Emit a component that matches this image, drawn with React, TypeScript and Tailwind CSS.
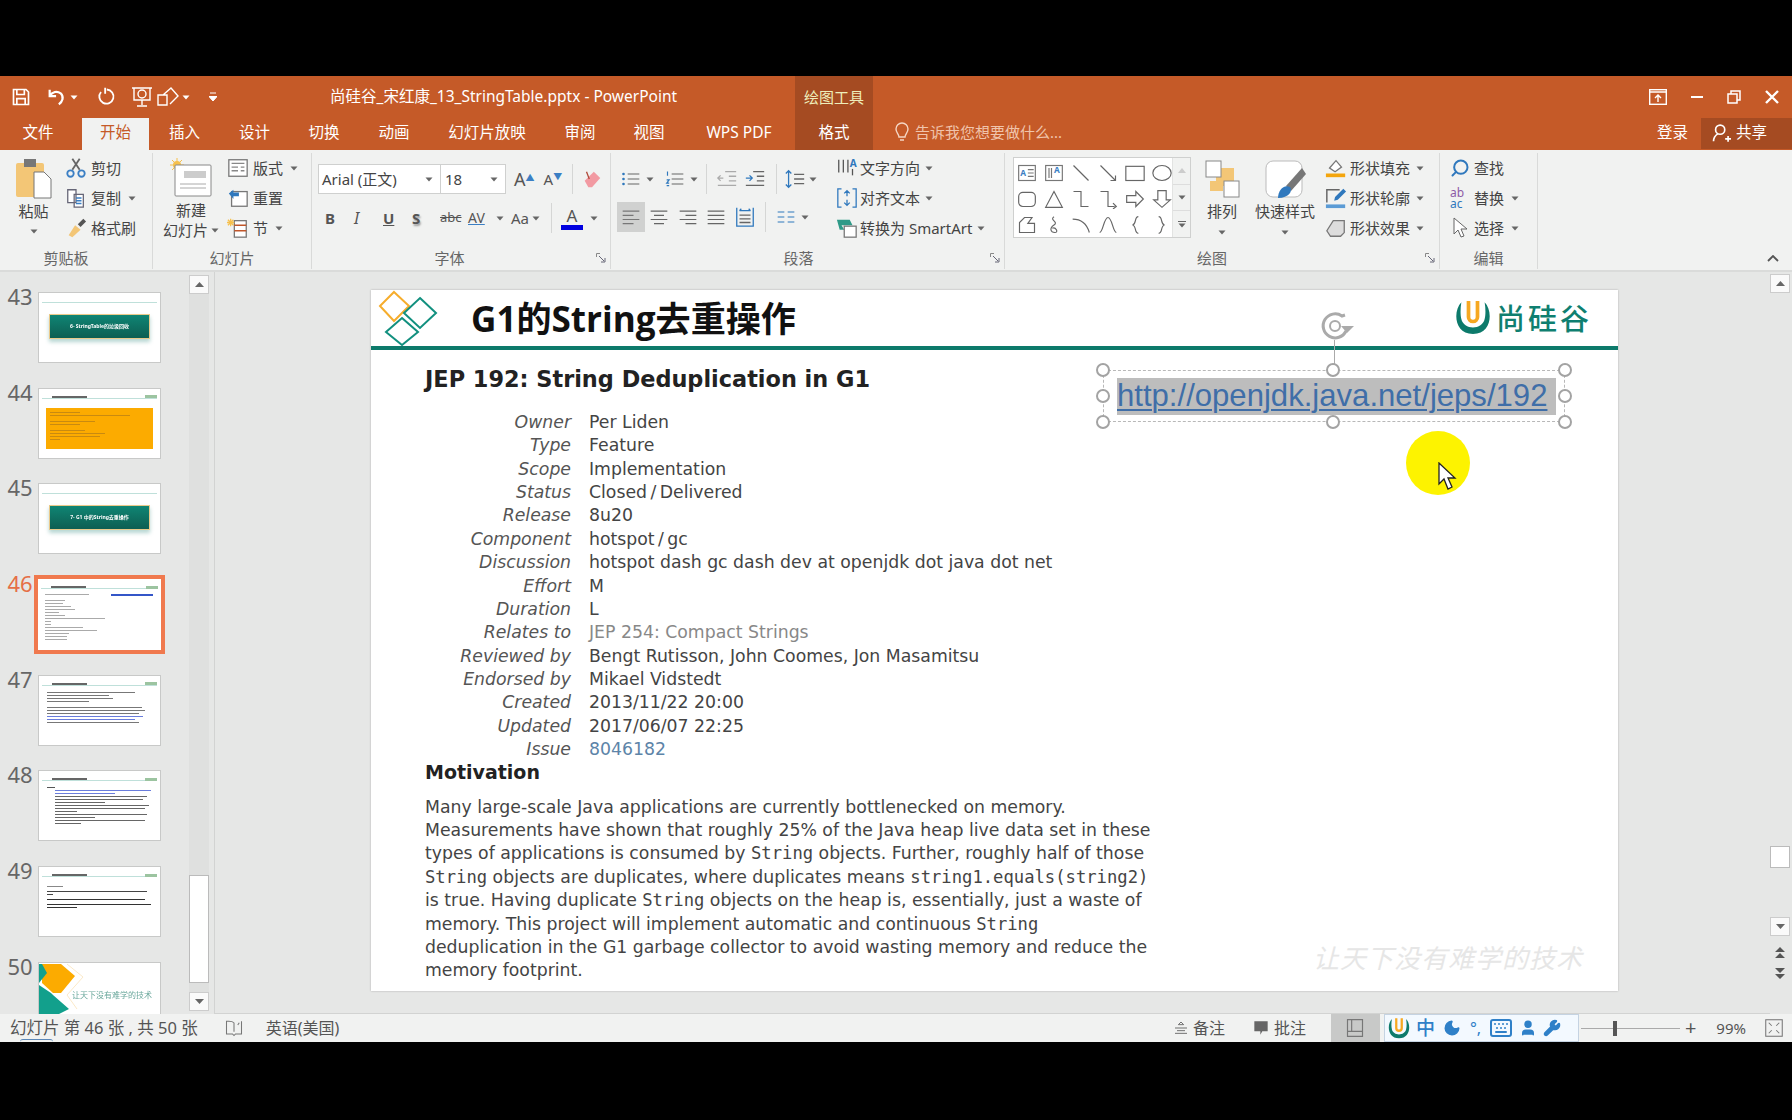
import { ReactNode } from "react";
import { Keyboard, Moon, Search, User, Wrench } from "lucide-react";

const tabs = [
  { name: "文件", cls: "w-[82px] pr-[6px] text-white" },
  { name: "开始", cls: "w-[67px] bg-[#f1f2f1] text-[#c55a28]" },
  { name: "插入", cls: "w-[71px] text-white" },
  { name: "设计", cls: "w-[69px] text-white" },
  { name: "切换", cls: "w-[70px] text-white" },
  { name: "动画", cls: "w-[70px] text-white" },
  { name: "幻灯片放映", cls: "w-[116px] text-white" },
  { name: "审阅", cls: "w-[70px] text-white" },
  { name: "视图", cls: "w-[68px] text-white" },
  { name: "WPS PDF", cls: "w-[112px] text-white" },
  { name: "格式", cls: "w-[78px] bg-[#a54b22] text-white" },
];

const jepRows = [
  ["Owner", "Per Liden"],
  ["Type", "Feature"],
  ["Scope", "Implementation"],
  ["Status", "Closed\u2009/\u2009Delivered"],
  ["Release", "8u20"],
  ["Component", "hotspot\u2009/\u2009gc"],
  ["Discussion", "hotspot dash gc dash dev at openjdk dot java dot net"],
  ["Effort", "M"],
  ["Duration", "L"],
  ["Relates to", "JEP 254: Compact Strings"],
  ["Reviewed by", "Bengt Rutisson, John Coomes, Jon Masamitsu"],
  ["Endorsed by", "Mikael Vidstedt"],
  ["Created", "2013/11/22 20:00"],
  ["Updated", "2017/06/07 22:25"],
  ["Issue", "8046182"],
];

function Caret({ className = "" }: { className?: string }) {
  return (
    <svg width="8" height="5" viewBox="0 0 8 5" className={className}>
      <path d="M0.5 0.5h7L4 4.5z" fill="#666" />
    </svg>
  );
}

function Launcher() {
  return (
    <svg width="10" height="10" viewBox="0 0 10 10" className="absolute bottom-[6px] right-[4px]">
      <path d="M0.5 4V0.5H4" stroke="#888" fill="none" />
      <path d="M3 3l5 5M9 5v4H5" stroke="#667" fill="none" />
    </svg>
  );
}

function Group({ width, label, labelCls = "", children }: { width: string; label: string; labelCls?: string; children: ReactNode }) {
  return (
    <div className={`relative h-[116px] shrink-0 border-r border-[#d9dad9] ${width}`}>
      <div className="flex h-[92px] items-start">{children}</div>
      <div className={`absolute inset-x-0 bottom-[1px] text-center text-[15px] leading-[20px] text-[#666] ${labelCls}`}>{label}</div>
    </div>
  );
}

function RowItem({ icon, text, caret, gap = "gap-[4px]" }: { icon: ReactNode; text: string; caret?: boolean; gap?: string }) {
  return (
    <div className={`flex h-[30px] items-center whitespace-nowrap text-[15px] text-[#444] ${gap}`}>
      {icon}
      <span>{text}</span>
      {caret ? <Caret className="ml-[3px]" /> : null}
    </div>
  );
}

function Ico({ children, w = 22, h = 22, vb = "0 0 24 24", className = "" }: { children: ReactNode; w?: number; h?: number; vb?: string; className?: string }) {
  return (
    <svg width={w} height={h} viewBox={vb} fill="none" strokeWidth="1.4" className={`shrink-0 ${className}`}>
      {children}
    </svg>
  );
}

function ULogo({ w, h }: { w: number; h: number }) {
  return (
    <svg width={w} height={h} viewBox="0 0 34 34" className="shrink-0">
      <path d="M6 3C-2 11-1 33 17 33S36 11 28 3c1 6 1 12 0 16-1 5-6 8-11 8s-10-3-11-8C5 15 5 9 6 3z" fill="#0d7a6b" />
      <path d="M11 2h3.500v15a2.500 2.500 0 0 0 5 0V2H23v15a6 6 0 0 1-12 0z" fill="#f6a821" />
    </svg>
  );
}

const gallery: ReactNode[] = [
  <g key="a"><rect x="2" y="3" width="20" height="18" stroke="#777" /><text x="4" y="15" fontSize="10" fontWeight="700" fill="#3b7fc4">A</text><path d="M13 8h7M13 12h7M13 16h7" stroke="#777" /></g>,
  <g key="b"><rect x="2" y="3" width="20" height="18" stroke="#777" /><text x="12" y="12" fontSize="10" fontWeight="700" fill="#3b7fc4">A</text><path d="M6 6v12M9 6v12" stroke="#777" /></g>,
  <path key="c" d="M3 3l18 18" stroke="#666" />,
  <path key="d" d="M3 3l18 18M21 15v6h-6" stroke="#666" />,
  <rect key="e" x="1" y="4" width="22" height="17" stroke="#666" />,
  <ellipse key="f" cx="12" cy="12" rx="11" ry="9" stroke="#666" />,
  <rect key="g" x="2" y="4" width="20" height="17" rx="5" stroke="#666" />,
  <path key="h" d="M12 3l10 19H2z" stroke="#666" />,
  <path key="i" d="M3 3h9v18h9" stroke="#666" />,
  <path key="j" d="M3 3h9v18h8M18 17l4 4-4 3" stroke="#666" />,
  <path key="k" d="M2 8h11V3l9 9-9 9v-5H2z" stroke="#666" />,
  <path key="l" d="M7 2h10v11h5l-10 9-10-9h5z" stroke="#666" />,
  <path key="m" d="M3 21V9l6-6h9l-5 7h8v11z" stroke="#666" />,
  <path key="n" d="M12 2c-6 4 6 6 0 10s-4 9 1 9 1-7-3-5" stroke="#666" />,
  <path key="o" d="M2 5c10 0 17 6 20 16" stroke="#666" />,
  <path key="p" d="M2 21C6 21 7 3 12 3s6 18 10 18" stroke="#666" />,
  <path key="q" d="M16 2c-5 0-2 9-7 10 5 1 2 10 7 10" stroke="#666" />,
  <path key="r" d="M8 2c5 0 2 9 7 10-5 1-2 10-7 10" stroke="#666" />,
];

function TextLines({ widths, color = "bg-[#777]", indent = 0 }: { widths: number[]; color?: string; indent?: number }) {
  return (
    <div className="flex flex-col gap-[2px]" style={{ paddingLeft: indent }}>
      {widths.map((w, i) => (
        <div key={i} className={`h-px ${color}`} style={{ width: w }} />
      ))}
    </div>
  );
}

function Thumb({ number, active, title, children }: { number: number; active?: boolean; title?: boolean; children?: ReactNode }) {
  return (
    <div className="relative mb-[24.7px] h-[71px] w-[123px] shrink-0">
      <div className={`absolute left-[-33px] top-[-14px] w-[30px] text-center text-[22px] leading-[36px] ${active ? "text-[#e56f47]" : "text-[#666]"}`}>{number}</div>
      <div className={`h-full overflow-hidden bg-white ${active ? "outline-[4px] outline-[#f0794e]" : "border border-[#c8c9c8]"}`}>
        <div className="h-full blur-[0.4px]">
          {title ? (
            <div className="mx-[3px] mt-[7px] flex h-[3px] items-center justify-between border-b border-[#bfe0da]">
              <div className="ml-[10px] h-[2px] w-[35px] bg-[#666]" />
              <div className="h-[3px] w-[12px] bg-[#9cc4a0]" />
            </div>
          ) : null}
          {children}
        </div>
      </div>
    </div>
  );
}

function TealBanner({ text }: { text: string }) {
  return (
    <div className="mx-[10px] mt-[11px] flex h-[25px] items-center justify-center border border-[#e9c98a] bg-gradient-to-b from-[#0f8574] to-[#0d5e52] text-[5px] font-bold text-white shadow-[0_3px_4px_rgba(15,120,105,0.3)]">
      {text}
    </div>
  );
}

function ThumbPanel() {
  return (
    <div className="relative flex h-full w-[215px] shrink-0 border-r border-[#d2d3d2]">
      <div className="h-full w-[189px] overflow-hidden pl-[38px] pt-[20px]">
        <Thumb number={43}>
          <div className="mx-[3px] mt-[7px] h-[3px] border-b border-[#bfe0da]" />
          <TealBanner text="6- StringTable的垃圾回收" />
        </Thumb>
        <Thumb number={44} title>
          <div className="mx-[7px] mt-[9px] h-[41px] bg-[#fcab00] p-[4px]">
            <TextLines widths={[30, 80, 0, 45, 30, 0, 35, 55, 50, 10]} color="bg-[#c98a10]" />
          </div>
        </Thumb>
        <Thumb number={45}>
          <div className="mx-[3px] mt-[7px] h-[3px] border-b border-[#bfe0da]" />
          <TealBanner text="7- G1 中的String去重操作" />
        </Thumb>
        <Thumb number={46} active title>
          <div className="relative px-[7px] pt-[5px]">
            <div className="absolute right-[8px] top-[5px] h-[2px] w-[42px] bg-[#3456c8]" />
            <TextLines widths={[44, 0, 20, 18, 26, 30, 14, 20, 60, 6, 6, 38, 52, 24, 22, 22]} color="bg-[#aaa]" />
          </div>
        </Thumb>
        <Thumb number={47} title>
          <div className="px-[8px] pt-[6px]">
            <TextLines widths={[88, 62, 66, 42, 0, 95, 98, 92]} color="bg-[#777]" />
            <div className="mt-[2px]"><TextLines widths={[96, 88]} color="bg-[#6a7ddc]" /></div>
            <div className="mt-[2px]"><TextLines widths={[92]} color="bg-[#777]" /></div>
          </div>
        </Thumb>
        <Thumb number={48} title>
          <div className="px-[8px] pt-[6px]">
            <TextLines widths={[8]} color="bg-[#555]" />
            <div className="mt-[2px]"><TextLines widths={[96, 60]} color="bg-[#6a7ddc]" indent={8} /></div>
            <div className="mt-[2px]"><TextLines widths={[92, 88, 50, 94, 90, 22, 92, 40, 90, 26]} color="bg-[#666]" indent={8} /></div>
          </div>
        </Thumb>
        <Thumb number={49} title>
          <div className="px-[8px] pt-[9px]">
            <TextLines widths={[16]} color="bg-[#888]" />
            <div className="mt-[4px]"><TextLines widths={[100, 6]} color="bg-[#444]" /></div>
            <div className="mt-[4px]"><TextLines widths={[98]} color="bg-[#333]" /></div>
            <div className="mt-[4px]"><TextLines widths={[104, 30]} color="bg-[#333]" /></div>
          </div>
        </Thumb>
        <Thumb number={50}>
          <div className="relative h-full">
            <svg width="123" height="70" viewBox="0 0 123 70" className="absolute inset-0">
              <path d="M3 1H22L36 13 22 30H14L3 20z" fill="#fcab00" />
              <path d="M0 1h3L8 10 0 20z" fill="#12a08c" />
              <path d="M0 22L12 30 14 32 30 46 18 52H0z" fill="#12a08c" />
              <path d="M28 1l16 13-16 18 10 14" stroke="#fbe9c8" fill="none" />
            </svg>
            <div className="absolute left-[33px] top-[26px] whitespace-nowrap text-[8px] text-[#6aa89c]">让天下没有难学的技术</div>
          </div>
        </Thumb>
      </div>
      <div className="relative my-[3px] w-[20px] shrink-0 bg-[#dfe0df]">
        <div className="flex h-[19px] items-center justify-center border border-[#ccc] bg-[#fafafa]">
          <svg width="9" height="5" viewBox="0 0 9 5"><path d="M4.5 0L9 5H0z" fill="#666" /></svg>
        </div>
        <div className="absolute inset-x-0 top-[600px] h-[108px] border border-[#bbb] bg-white" />
        <div className="absolute inset-x-0 bottom-0 flex h-[19px] items-center justify-center border border-[#ccc] bg-[#fafafa]">
          <svg width="9" height="5" viewBox="0 0 9 5"><path d="M0 0h9L4.5 5z" fill="#666" /></svg>
        </div>
      </div>
    </div>
  );
}

function Handle({ className }: { className: string }) {
  return <div className={`absolute h-[14px] w-[14px] rounded-full border-2 border-[#a3a3a3] bg-white ${className}`} />;
}

function Code({ children }: { children: string }) {
  return <code className="font-['DejaVu_Sans_Mono',monospace] text-[17.2px] leading-none">{children}</code>;
}

function Slide() {
  return (
    <div className="relative h-[701px] w-[1247px] bg-white font-['DejaVu_Sans',sans-serif] shadow-[0_0_2px_rgba(0,0,0,0.25)]">
      <div className="flex h-[60px] items-center border-b-[4px] border-[#0d7a6b]">
        <svg width="60" height="56" viewBox="0 0 60 56" className="ml-[7px] shrink-0">
          <path d="M16 2l15 14-15 15L2 16z" fill="none" stroke="#f6ad2c" strokeWidth="2" />
          <path d="M42 8l16 15-16 15-16-15z" fill="none" stroke="#12907f" strokeWidth="2" />
          <path d="M24 28l16 14-16 13-16-13z" fill="none" stroke="#12907f" strokeWidth="2" />
        </svg>
        <div className="ml-[33px] whitespace-nowrap font-['Open_Sans','Noto_Sans_CJK_SC',sans-serif] text-[35.1px] font-bold leading-[50px] text-[#111]">G1的String去重操作</div>
      </div>
      <div className="pl-[54px]">
        <h1 className="mt-[13px] text-[22.4px] font-bold leading-[32px] text-[#222]">JEP 192: String Deduplication in G1</h1>
        <div className="mt-[16px] text-[17.3px] leading-[23.36px]">
          {jepRows.map(([label, value]) => (
            <div key={label} className="flex">
              <div className="w-[146px] whitespace-nowrap text-right italic text-[#555]">{label}</div>
              <div className={`ml-[18px] whitespace-nowrap ${label === "Issue" ? "text-[#5d84a8]" : label === "Relates to" ? "text-[#888]" : "text-[#444]"}`}>{value}</div>
            </div>
          ))}
        </div>
        <h2 className="text-[19px] font-bold leading-[23.36px] text-[#222]">Motivation</h2>
        <p className="mt-[11px] whitespace-nowrap text-[17.3px] leading-[23.36px] text-[#444]">
          Many large-scale Java applications are currently bottlenecked on memory.<br />
          Measurements have shown that roughly 25% of the Java heap live data set in these<br />
          types of applications is consumed by <Code>String</Code> objects. Further, roughly half of those<br />
          <Code>String</Code> objects are duplicates, where duplicates means <Code>string1.equals(string2)</Code><br />
          is true. Having duplicate <Code>String</Code> objects on the heap is, essentially, just a waste of<br />
          memory. This project will implement automatic and continuous <Code>String</Code><br />
          deduplication in the G1 garbage collector to avoid wasting memory and reduce the<br />
          memory footprint.
        </p>
      </div>

      <svg width="38" height="38" viewBox="0 0 38 38" className="absolute left-[947px] top-[17px]">
        <circle cx="17" cy="19" r="5" fill="none" stroke="#aaa" strokeWidth="2" />
        <path d="M28 24A12 12 0 1 1 24 9l3-1" fill="none" stroke="#aaa" strokeWidth="3" />
        <path d="M23 19h13l-7 7z" fill="#aaa" />
      </svg>

      <div className="absolute right-[26px] top-[9px] flex items-center gap-[5px]">
        <ULogo w={36} h={36} />
        <span className="whitespace-nowrap font-['Noto_Sans_CJK_SC',sans-serif] text-[29px] font-medium leading-[34px] tracking-[3px] text-[#0f7f70]">尚硅谷</span>
      </div>

      <div className="absolute left-[732px] top-[80px] h-[52px] w-[462px] border border-dashed border-[#b8b8b8]">
        <div className="ml-[13px] mt-[7px] h-[37px] w-[439px] whitespace-nowrap bg-[#bdbdbd] font-['Liberation_Sans',sans-serif] text-[31.1px] leading-[36px] text-[#3f6ea8] underline decoration-[2px] underline-offset-[3px]">http://openjdk.java.net/jeps/192</div>
        <div className="absolute bottom-[51px] left-[230px] h-[30px] w-px bg-[#aaa]" />
        <Handle className="left-[-8px] top-[-8px]" />
        <Handle className="left-[222px] top-[-8px]" />
        <Handle className="right-[-8px] top-[-8px]" />
        <Handle className="left-[-8px] top-[18px]" />
        <Handle className="right-[-8px] top-[18px]" />
        <Handle className="bottom-[-8px] left-[-8px]" />
        <Handle className="bottom-[-8px] left-[222px]" />
        <Handle className="bottom-[-8px] right-[-8px]" />
      </div>

      <div className="absolute left-[1035px] top-[141px] h-[64px] w-[64px] rounded-full bg-[#fdf300]" />
      <svg width="20" height="30" viewBox="0 0 20 30" className="absolute left-[1067px] top-[172px]">
        <path d="M1 1v21l5-5 4 10 4-2-4-9h7z" fill="#fff" stroke="#222" strokeWidth="1.3" />
      </svg>

      <div className="absolute left-[942px] top-[649px] whitespace-nowrap font-['Noto_Sans_CJK_SC',sans-serif] text-[26px] italic leading-[36px] tracking-[1px] text-[#e6e6e6]">让天下没有难学的技术</div>
    </div>
  );
}

export default function App() {
  return (
    <div className="flex h-screen w-[1792px] flex-col overflow-hidden bg-black pt-[76px] pb-[78px] font-['Noto_Sans','Noto_Sans_CJK_SC',sans-serif]">
      {/* title bar */}
      <div className="relative flex h-[42px] shrink-0 items-center bg-[#c55a28] text-white">
        <div className="flex items-center pl-[11px]">
          <Ico w={20} h={20}><path d="M3 3h15l3 3v15H3zM7 3v6h9V3M7 21v-7h10v7" stroke="#fff" strokeWidth="2" /></Ico>
          <Ico w={22} h={22} className="ml-[15px]"><path d="M4 4v7h7M4 11c3-5 8-6 12-3 4 4 2 9-2 12" stroke="#fff" strokeWidth="2.4" /></Ico>
          <Caret className="ml-[2px] brightness-[5]" />
          <Ico w={20} h={20} className="ml-[18px]"><path d="M13 3a8.500 8.500 0 1 1-7 3M11 1v7" stroke="#fff" strokeWidth="2.2" /></Ico>
          <Ico w={24} h={24} className="ml-[14px]"><path d="M2 3h20M4 3v12h16V3M12 15v5M7 21h10" stroke="#fff" /><circle cx="12" cy="9" r="4" stroke="#fff" /></Ico>
          <Ico w={24} h={24} className="ml-[2px]"><path d="M2 10h9v10H2zM7 10l8-7 7 8-8 8" stroke="#fff" /></Ico>
          <Caret className="ml-[2px] brightness-[5]" />
          <svg width="8" height="10" viewBox="0 0 8 10" className="ml-[19px]"><path d="M1 1h6M0 4.500h8L4 9z" stroke="#fff" fill="#fff" /></svg>
        </div>
        <div className="absolute left-[330px] whitespace-nowrap text-[15.5px] text-white">尚硅谷_宋红康_13_StringTable.pptx - PowerPoint</div>
        <div className="absolute left-[795px] top-0 flex h-[42px] w-[78px] items-center justify-center bg-[#a54b22] text-[15px] text-[#eeb]">绘图工具</div>
        <div className="absolute right-[13px] flex items-center gap-[24px]">
          <Ico w={18} h={16} vb="0 0 18 16"><rect x="0.7" y="0.7" width="16.6" height="14.6" stroke="#fff" /><path d="M1 3h16M9 13V6M6 9l3-3 3 3" stroke="#fff" /></Ico>
          <div className="h-[2px] w-[12px] bg-white" />
          <Ico w={14} h={14} vb="0 0 14 14"><path d="M1 4h9v9H1zM4 4V1h9v9h-3" stroke="#fff" strokeWidth="1.5" /></Ico>
          <Ico w={14} h={14} vb="0 0 14 14"><path d="M1 1l12 12M13 1L1 13" stroke="#fff" strokeWidth="2.4" /></Ico>
        </div>
      </div>

      {/* tabs */}
      <div className="relative flex h-[32px] shrink-0 items-stretch bg-[#c55a28] text-[15.5px] leading-[28px]">
        {tabs.map((t) => (
          <div key={t.name} className={`flex items-start justify-center ${t.cls}`}>{t.name}</div>
        ))}
        <div className="ml-[21px] flex items-start gap-[5px] text-[15px] text-[#f0c4ac]">
          <Ico w={16} h={20} vb="0 0 16 20" className="mt-[4px]"><path d="M5 15c0-3-3-4-3-8a6 6 0 0 1 12 0c0 4-3 5-3 8zM6 18h4" stroke="#f5d6c4" /></Ico>
          告诉我您想要做什么...
        </div>
        <div className="absolute right-0 flex h-full items-start text-[15.5px] text-white">
          <span className="mr-[13px]">登录</span>
          <div className="flex h-[31px] w-[91px] items-start gap-[5px] bg-[#a54b22] pl-[10px]">
            <Ico w={20} h={20} className="mt-[5px]"><circle cx="11" cy="8" r="5.500" stroke="#fff" strokeWidth="2" /><path d="M3 22c0-4 2-7 5-9M17 19h7M20.500 15.500v7" stroke="#fff" strokeWidth="2" /></Ico>
            共享
          </div>
        </div>
      </div>

      {/* ribbon */}
      <div className="relative flex h-[122px] shrink-0 items-start border-b-2 border-[#dadbda] bg-[#f1f2f1] pt-[3px]">
        <Group width="w-[153px]" label="剪贴板" labelCls="pr-[20px]">
          <div className="flex w-[65px] flex-col items-center pl-[2px] pt-[5px] text-[15px] text-[#444]">
            <svg width="38" height="42" viewBox="0 0 38 42">
              <rect x="1" y="5" width="28" height="34" rx="2" fill="#f3c676" />
              <rect x="9" y="1" width="12" height="8" fill="#777" />
              <path d="M19 14h10l7 7v19H19z" fill="#fff" stroke="#777" />
            </svg>
            <span className="mt-[1px] leading-[20px]">粘贴</span>
            <Caret className="mt-[8px]" />
          </div>
          <div>
            <RowItem icon={<Ico><path d="M8 2l8 12M16 2L8 14" stroke="#666" strokeWidth="2" /><circle cx="6" cy="18" r="3.500" stroke="#3b7fc4" strokeWidth="2" /><circle cx="18" cy="18" r="3.500" stroke="#3b7fc4" strokeWidth="2" /></Ico>} text="剪切" />
            <RowItem icon={<Ico><path d="M3 3h9v14H3zM10 8h10v14H10z" fill="#fff" stroke="#667" /><path d="M12 12h6M12 15h6M12 18h6" stroke="#3b7fc4" /></Ico>} text="复制" caret />
            <RowItem icon={<Ico><path d="M4 20l7-11 6 5-9 8z" fill="#f3c676" /><path d="M14 8l6-6 3 3-6 6z" fill="#555" /></Ico>} text="格式刷" />
          </div>
        </Group>
        <Group width="w-[159px]" label="幻灯片">
          <div className="flex w-[74px] flex-col items-center pl-[2px] pt-[5px] text-[15px] leading-[20px] text-[#444]">
            <svg width="42" height="40" viewBox="0 0 42 40">
              <circle cx="7" cy="7" r="4" fill="#f6c04d" />
              <path d="M7 0v14M0 7h14M2 2l10 10M12 2L2 12" stroke="#f6c04d" />
              <rect x="5" y="7" width="36" height="31" rx="1" fill="#fff" stroke="#888" />
              <rect x="14" y="13" width="22" height="7" fill="#ccc" />
              <path d="M10 26h26M10 30h26" stroke="#aaa" />
            </svg>
            <span className="mt-[2px]">新建</span>
            <span className="flex items-center gap-[3px] whitespace-nowrap">幻灯片<Caret /></span>
          </div>
          <div>
            <RowItem icon={<Ico><rect x="2" y="3" width="20" height="18" fill="#fff" stroke="#777" /><path d="M5 7h14M5 11h7M5 15h7M15 11h4M15 15h4" stroke="#888" /></Ico>} text="版式" caret />
            <RowItem icon={<Ico><rect x="5" y="5" width="17" height="16" fill="#fff" stroke="#777" /><path d="M2 7l5-4v3h6v4H7v3z" fill="#2f78bd" /></Ico>} text="重置" />
            <RowItem icon={<Ico><rect x="8" y="4" width="13" height="18" fill="#fff" stroke="#777" /><path d="M8 9h13M8 15h13" stroke="#c0562a" /><path d="M4 2v8M0 6h8M1 3l6 6M7 3L1 9" stroke="#f6c04d" /></Ico>} text="节" caret />
          </div>
        </Group>
        <Group width="w-[299px]" label="字体" labelCls="pr-[23px]">
          <div className="w-full pl-[6px] pt-[11px]">
            <div className="flex items-center">
              <div className="flex h-[30px] w-[123px] items-center justify-between border border-[#cfd0cf] bg-white pl-[3px] pr-[7px] text-[15px] text-[#444]">Arial (正文)<Caret /></div>
              <div className="flex h-[30px] w-[65px] items-center justify-between border border-l-0 border-[#cfd0cf] bg-white pl-[4px] pr-[7px] text-[15px] text-[#444]">18<Caret /></div>
              <span className="ml-[8px] text-[18px] text-[#555]">A<sup className="text-[9px] text-[#3b7fc4]">▲</sup></span>
              <span className="ml-[9px] text-[15px] text-[#555]">A<sup className="text-[9px] text-[#3b7fc4]">▼</sup></span>
              <div className="ml-[10px] h-[30px] w-px bg-[#d5d6d5]" />
              <Ico w={22} h={24} className="ml-[8px]"><path d="M4 14L14 4l7 7-9 10H8z" fill="#f29aa2" /><path d="M6 4l3 8" stroke="#b04a3a" /></Ico>
            </div>
            <div className="mt-[9px] flex items-center text-[#555]">
              <span className="ml-[7px] w-[28px] text-[15px] font-bold">B</span>
              <span className="ml-[1px] w-[29px] text-[16px] italic">I</span>
              <span className="w-[29px] text-[15px] font-bold underline">U</span>
              <span className="w-[28px] text-[15px] font-bold [text-shadow:1px_2px_2px_#999]">S</span>
              <span className="w-[28px] text-[13px] line-through">abc</span>
              <span className="w-[28px] text-[14px] leading-[14px] underline decoration-[#3b7fc4]">AV</span>
              <Caret className="mr-[7px]" />
              <span className="text-[15px]">Aa</span>
              <Caret className="ml-[3px]" />
              <div className="ml-[11px] h-[30px] w-px bg-[#d5d6d5]" />
              <div className="ml-[9px] flex w-[22px] flex-col items-center text-[17px] leading-[18px]">
                <span>A</span>
                <div className="h-[5px] w-full bg-[#0000e0]" />
              </div>
              <Caret className="ml-[7px]" />
            </div>
          </div>
          <Launcher />
        </Group>
        <Group width="w-[394px]" label="段落" labelCls="pr-[18px]">
          <div className="w-[215px] pl-[10px] pt-[11px]">
            <div className="flex h-[30px] items-center">
              <Ico w={20} h={20}><circle cx="3" cy="6" r="1.600" fill="#2f78bd" /><circle cx="3" cy="12" r="1.600" fill="#2f78bd" /><circle cx="3" cy="18" r="1.600" fill="#2f78bd" /><path d="M8 6h14M8 12h14M8 18h14" stroke="#666" /></Ico>
              <Caret className="ml-[5px]" />
              <Ico w={20} h={20} className="ml-[11px]"><path d="M3 3v5M2 13h3l-3 4h3M2 20h3" stroke="#2f78bd" /><path d="M8 6h14M8 12h14M8 18h14" stroke="#666" /></Ico>
              <Caret className="ml-[5px]" />
              <div className="ml-[8px] h-[30px] w-px bg-[#d5d6d5]" />
              <Ico w={24} h={22} className="ml-[8px]"><path d="M10 4h12M14 9h8M14 14h8M2 19h20M8 11H2M5 8l-3 3 3 3" stroke="#aaa" /></Ico>
              <Ico w={24} h={22} className="ml-[4px]"><path d="M10 4h12M14 9h8M14 14h8M2 19h20" stroke="#666" /><path d="M2 11h7M6 8l3 3-3 3" stroke="#2f78bd" /></Ico>
              <div className="ml-[9px] h-[30px] w-px bg-[#d5d6d5]" />
              <Ico w={22} h={22} className="ml-[7px]"><path d="M5 3v18M2 6l3-3 3 3M2 18l3 3 3-3" stroke="#2f78bd" /><path d="M11 7h11M11 12h11M11 17h11" stroke="#666" /></Ico>
              <Caret className="ml-[3px]" />
            </div>
            <div className="mt-[8px] flex h-[30px] items-center">
              <div className="ml-[-4px] flex h-[30px] w-[28px] items-center justify-center bg-[#d0d1d0]"><Ico w={20} h={20}><path d="M2 5h20M2 10h13M2 15h20M2 20h13" stroke="#777" /></Ico></div>
              <Ico w={20} h={20} className="ml-[4px]"><path d="M2 5h20M6 10h12M2 15h20M6 20h12" stroke="#666" /></Ico>
              <Ico w={20} h={20} className="ml-[9px]"><path d="M2 5h20M9 10h13M2 15h20M9 20h13" stroke="#666" /></Ico>
              <Ico w={20} h={20} className="ml-[8px]"><path d="M2 5h20M2 10h20M2 15h20M2 20h20" stroke="#666" /></Ico>
              <Ico w={22} h={24} className="ml-[8px]"><path d="M3 2v20H21V2M6 5h12M6 5l2-2M18 5l-2-2" stroke="#2f78bd" /><path d="M6 10h12M6 14h12M6 18h12" stroke="#666" /></Ico>
              <div className="ml-[9px] h-[30px] w-px bg-[#d5d6d5]" />
              <Ico w={20} h={20} className="ml-[10px]"><path d="M2 6h8M14 6h8M2 12h8M14 12h8M2 18h8M14 18h8" stroke="#2f78bd" /></Ico>
              <Caret className="ml-[5px]" />
            </div>
          </div>
          <div className="ml-[10px]">
            <RowItem icon={<Ico><path d="M3 3v14M8 3v14M13 3v14" stroke="#555" /><text x="15" y="11" fontSize="11" fontWeight="700" fill="#2f78bd">A</text><path d="M18 13v7" stroke="#555" /></Ico>} text="文字方向" caret gap="gap-[2px]" />
            <RowItem icon={<Ico><path d="M6 2H2v20h4M18 2h4v20h-4M12 4v6M9 7l3-3 3 3M12 20v-6M9 17l3 3 3-3" stroke="#2f78bd" /></Ico>} text="对齐文本" caret gap="gap-[2px]" />
            <RowItem icon={<Ico><path d="M1 3h14l3 6H6l3 5H4z" fill="#2f9a88" /><rect x="9" y="10" width="13" height="12" fill="#fff" stroke="#777" /></Ico>} text="转换为 SmartArt" caret gap="gap-[2px]" />
          </div>
          <Launcher />
        </Group>
        <Group width="w-[435px]" label="绘图" labelCls="pr-[20px]">
          <div className="ml-[8px] mt-[4px] flex h-[81px] w-[178px] border border-[#cfd0cf] bg-white">
            <div className="grid flex-1 grid-cols-6 content-center gap-x-[7px] gap-y-[6px] pl-[3px] pt-[2px]">
              {gallery.map((g, i) => (
                <Ico key={i} w={20} h={20}>{g}</Ico>
              ))}
            </div>
            <div className="flex w-[18px] flex-col border-l border-[#e2e3e2] bg-[#f1f2f1]">
              <div className="flex flex-1 items-center justify-center border-b border-[#ddd]"><svg width="8" height="5" viewBox="0 0 8 5"><path d="M4 0l4 5H0z" fill="#ccc" /></svg></div>
              <div className="flex flex-1 items-center justify-center border-b border-[#ddd]"><Caret /></div>
              <div className="flex flex-1 flex-col items-center justify-center gap-[1px]"><div className="h-px w-[8px] bg-[#666]" /><Caret /></div>
            </div>
          </div>
          <div className="flex w-[58px] flex-col items-center pl-[4px] pt-[7px] text-[15px] leading-[22px] text-[#444]">
            <svg width="36" height="38" viewBox="0 0 36 38">
              <rect x="12" y="8" width="18" height="18" fill="#f3c676" />
              <rect x="2" y="1" width="15" height="16" fill="#fff" stroke="#888" />
              <rect x="20" y="21" width="15" height="16" fill="#fff" stroke="#888" />
              <rect x="6" y="21" width="13" height="10" fill="#f3c676" />
            </svg>
            <span className="mt-[2px]">排列</span>
            <Caret className="mt-[8px]" />
          </div>
          <div className="flex w-[68px] flex-col items-center pl-[4px] pt-[7px] text-[15px] leading-[22px] text-[#444]">
            <svg width="42" height="40" viewBox="0 0 42 40">
              <rect x="2" y="1" width="36" height="36" rx="7" fill="#fff" stroke="#bbb" />
              <path d="M38 8L22 26l5 5L42 14z" fill="#777" />
              <path d="M14 38c0-8 6-14 12-11 3 4-1 11-12 11z" fill="#2f78bd" />
            </svg>
            <span className="whitespace-nowrap">快速样式</span>
            <Caret className="mt-[8px]" />
          </div>
          <div className="ml-[8px]">
            <RowItem icon={<Ico><path d="M5 12l7-8 6 7-7 5z" fill="#fff" stroke="#777" /><rect x="1" y="18" width="21" height="4" fill="#f4a50d" /></Ico>} text="形状填充" caret gap="gap-[3px]" />
            <RowItem icon={<Ico><path d="M2 17V3h14" stroke="#666" strokeWidth="1.600" /><rect x="1" y="19" width="21" height="4" fill="#5b9bd5" /><path d="M20 2l3 3-9 9-4 1 1-4z" fill="#2f78bd" /></Ico>} text="形状轮廓" caret gap="gap-[3px]" />
            <RowItem icon={<Ico><path d="M2 15L9 4h12v13l-4 4H6z" fill="#ddd" stroke="#777" /></Ico>} text="形状效果" caret gap="gap-[3px]" />
          </div>
          <Launcher />
        </Group>
        <Group width="w-[98px]" label="编辑">
          <div className="pl-[10px]">
            <RowItem icon={<Search size={20} strokeWidth={2.4} color="#2f78bd" className="-scale-x-100" />} text="查找" gap="gap-[4px]" />
            <RowItem icon={<span className="w-[20px] text-[12px] leading-[11px] text-[#2f78bd]"><span className="text-[#8e5ba6]">ab</span><br />ac</span>} text="替换" caret gap="gap-[4px]" />
            <RowItem icon={<svg width="20" height="22" viewBox="0 0 20 22"><path d="M4 1v16l4-4 3 7 3-1-3-7h6z" fill="#fff" stroke="#666" /></svg>} text="选择" caret gap="gap-[4px]" />
          </div>
        </Group>
        <svg width="12" height="7" viewBox="0 0 12 7" className="absolute bottom-[8px] right-[13px]"><path d="M1 6l5-5 5 5" stroke="#555" strokeWidth="1.800" fill="none" /></svg>
      </div>

      {/* work area */}
      <div className="flex min-h-0 flex-1 bg-[#e6e7e6]">
        <ThumbPanel />
        <div className="flex-1 border-b border-[#d2d3d2] pl-[156px] pt-[18px]">
          <Slide />
        </div>
        <div className="relative w-[22px] shrink-0 bg-[#e6e7e6] pt-[2px] pr-[2px]">
          <div className="flex h-[19px] items-center justify-center border border-[#ccc] bg-[#fafafa]"><svg width="9" height="5" viewBox="0 0 9 5"><path d="M4.5 0L9 5H0z" fill="#666" /></svg></div>
          <div className="mt-[553px] h-[22px] border border-[#bbb] bg-white" />
          <div className="mt-[49px] flex h-[19px] items-center justify-center border border-[#ccc] bg-[#fafafa]"><svg width="9" height="5" viewBox="0 0 9 5"><path d="M0 0h9L4.5 5z" fill="#666" /></svg></div>
          <div className="mt-[11px] flex h-[20px] justify-center"><svg width="10" height="12" viewBox="0 0 10 12"><path d="M5 0l5 5H0zM5 6l5 5H0z" fill="#555" /></svg></div>
          <div className="mt-[1px] flex h-[20px] justify-center"><svg width="10" height="12" viewBox="0 0 10 12"><path d="M0 0h10L5 5zM0 6h10l-5 5z" fill="#555" /></svg></div>
        </div>
      </div>

      {/* status bar */}
      <div className="relative flex h-[28px] shrink-0 items-center bg-[#f1f2f1] text-[16px] text-[#555]">
        <span className="ml-[10px] whitespace-nowrap text-[16.5px]">幻灯片 第 46 张 , 共 50 张</span>
        <Ico w={18} h={18} className="ml-[27px]"><path d="M12 5C9 2 5 3 2 3v17h8l2 2 2-2h8V3M12 5v12M17 8l2-3" stroke="#777" /></Ico>
        <span className="ml-[23px]">英语(美国)</span>
        <div className="absolute bottom-0 left-[20px] h-[3px] w-[33px] rounded-t-full border-t border-[#5a87b8]" />
        <div className="ml-auto flex h-full items-center">
          <Ico w={16} h={18}><path d="M12 3l4 4H8zM3 12h18M6 16h12M3 20h18" stroke="#666" /></Ico>
          <span className="ml-[4px]">备注</span>
          <Ico w={16} h={16} className="ml-[28px]"><path d="M2 2h20v15h-8l-3 5v-5H2z" fill="#666" /></Ico>
          <span className="ml-[5px]">批注</span>
          <div className="ml-[25px] flex h-full w-[49px] items-center justify-center bg-[#c8c9c8]">
            <Ico w={20} h={20}><path d="M3 2h18v20H3zM3 16h18M8 2v14" stroke="#777" /></Ico>
          </div>
          <div className="ml-[4px] flex h-[28px] w-[195px] items-center gap-[6px] border border-[#c5d3e2] bg-[#f3f9ff] pl-[3px]">
            <ULogo w={22} h={24} />
            <span className="text-[19px] font-medium leading-none text-[#2f80c8]">中</span>
            <Moon size={18} fill="#2f80c8" stroke="#2f80c8" className="ml-[2px]" />
            <span className="ml-[3px] text-[16px] leading-none text-[#2f80c8]">°,</span>
            <Keyboard size={24} color="#2f80c8" className="ml-[2px]" />
            <User size={18} fill="#2f80c8" stroke="#2f80c8" />
            <Wrench size={18} fill="#2f80c8" stroke="#2f80c8" />
          </div>
          <div className="relative ml-[2px] h-px w-[99px] bg-[#aaa]">
            <div className="absolute left-[32px] top-[-7px] h-[15px] w-[4px] bg-[#555]" />
          </div>
          <span className="ml-[5px] text-[20px] leading-none text-[#555]">+</span>
          <span className="ml-[20px] text-[15px]">99%</span>
          <Ico w={18} h={18} className="ml-[19px] mr-[9px]"><rect x="1" y="1" width="22" height="22" stroke="#777" /><path d="M5 5l4 4M19 5l-4 4M5 19l4-4M19 19l-4-4" stroke="#777" /></Ico>
        </div>
      </div>
    </div>
  );
}
